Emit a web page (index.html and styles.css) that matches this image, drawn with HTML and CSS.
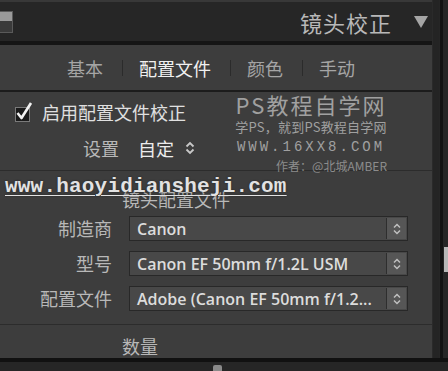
FILE: index.html
```html
<!DOCTYPE html>
<html lang="zh-CN">
<head>
  <meta charset="UTF-8">
  <title>镜头校正</title>
  <link rel="stylesheet" href="styles.css">
</head>
<body>
  <div class="frame">
    <div class="panel">
      <div class="header">
        <span class="switch"></span>
        <h1 class="title">镜头校正</h1>
        <span class="caret"></span>
      </div>

      <div class="tabs">
        <span class="tab">基本</span><span class="sep"></span>
        <span class="tab active">配置文件</span><span class="sep"></span>
        <span class="tab">颜色</span><span class="sep"></span>
        <span class="tab">手动</span>
      </div>

      <div class="profile">
        <label class="check-row">
          <svg class="check" width="20" height="22" viewBox="0 0 20 22">
            <rect x="1.5" y="6.5" width="14" height="14" fill="#1a1a1a" stroke="#7a7a7a" stroke-width="1"/>
            <path d="M3.5 12 L7.5 17 L17 2" fill="none" stroke="#f2f2f2" stroke-width="2.6" stroke-linejoin="round"/>
          </svg>
          <span>启用配置文件校正</span>
        </label>
        <div class="setting-row">
          <span class="setting-label">设置</span>
          <span class="setting-value">自定</span>
          <svg class="updown" width="10" height="14" viewBox="0 0 10 14">
            <path d="M1.5 5.5 L5 2 L8.5 5.5 M1.5 8.5 L5 12 L8.5 8.5" fill="none" stroke="#c8c8c8" stroke-width="1.8"/>
          </svg>
        </div>

        <div class="stamp">
          <div class="stamp-name">PS教程自学网</div>
          <div class="stamp-slogan">学PS，就到PS教程自学网</div>
          <div class="stamp-url">WWW.16XX8.COM</div>
          <div class="stamp-author">作者：@北城AMBER</div>
        </div>
      </div>

      <div class="lens">
        <h3 class="section-title">镜头配置文件</h3>
        <div class="fields">
          <span class="field-label">制造商</span>
          <div class="select"><span class="select-text">Canon</span><span class="spin"></span></div>
          <span class="field-label">型号</span>
          <div class="select"><span class="select-text">Canon EF 50mm f/1.2L USM</span><span class="spin"></span></div>
          <span class="field-label">配置文件</span>
          <div class="select"><span class="select-text">Adobe (Canon EF 50mm f/1.2...</span><span class="spin"></span></div>
        </div>
      </div>

      <div class="amount">
        <h3 class="section-title">数量</h3>
      </div>
    </div>

    <div class="gutter">
      <div class="thumb"></div>
    </div>
  </div>

  <div class="footer"><span class="handle"></span></div>

  <div class="site-mark">www.haoyidiansheji.com</div>
</body>
</html>
```

FILE: styles.css
```css
body { margin: 0; width: 448px; height: 371px; overflow: hidden; background: #202020; font-family: "Noto Sans CJK SC", sans-serif; position: relative; }
.frame { display: flex; height: 358px; }
.panel { width: 432px; border-right: 1px solid #2a2a2a; background: #3d3d3d; display: flex; flex-direction: column; }
.panel > div { flex-shrink: 0; }

.header { height: 39px; border-top: 2px solid #383838; border-bottom: 4px solid #151515; background: #262626; display: flex; align-items: center; }
.switch { width: 12px; height: 20px; margin-right: auto; border: 1px solid #5a5a5a; border-left: none; background: linear-gradient(#9a9a9a 0 45%, #3a3a3a 45% 100%); }
.title { margin: 0; font-size: 22px; font-weight: 400; letter-spacing: 1px; color: #b8b8b8; }
.caret { width: 0; height: 0; margin: 0 4px 0 22px; border-left: 7px solid transparent; border-right: 7px solid transparent; border-top: 12px solid #a5a5a5; }

.tabs { height: 45px; border-bottom: 2px solid #1c1c1c; display: flex; align-items: center; padding-left: 67px; font-size: 18px; color: #a5a5a5; }
.tab { line-height: 22px; }
.tab.active { color: #f0f0f0; }
.sep { width: 1px; height: 16px; background: #2b2b2b; margin: 0 16px 0 19px; }

.profile { position: relative; height: 70px; padding-top: 8px; border-bottom: 1px solid #2c2c2c; }
.check-row { display: flex; align-items: flex-end; padding-left: 14px; gap: 8px; font-size: 18px; color: #e0e0e0; height: 24px; line-height: 24px; }
.check { display: block; margin-bottom: 1px; }
.setting-row { display: flex; align-items: center; margin-top: 11px; padding-left: 83px; height: 26px; font-size: 18px; }
.setting-label { color: #b8b8b8; }
.setting-value { color: #ececec; margin-left: 19px; }
.updown { margin-left: 11px; }

.stamp { position: absolute; top: 0; left: 231px; width: 160px; text-align: center; color: #a0a0a0; white-space: nowrap; }
.stamp-name { font-size: 22px; line-height: 24px; letter-spacing: 2px; margin-bottom: 2px; }
.stamp-slogan { font-size: 13px; line-height: 18px; letter-spacing: 0.2px; margin-bottom: 2px; }
.stamp-url { font-family: "Liberation Mono", monospace; font-size: 14px; line-height: 18px; letter-spacing: 3px; margin-bottom: 2px; }
.stamp-author { font-size: 12px; line-height: 16px; text-align: right; padding-right: 4px; color: #8c8c8c; }

.lens { padding: 17px 0 13px; border-bottom: 1px solid #2c2c2c; }
.section-title { margin: 0 0 0 122px; font-size: 18px; font-weight: 400; line-height: 22px; color: #b8b8b8; }
.fields { display: grid; grid-template-columns: 112px 279px; column-gap: 17px; row-gap: 10px; margin-top: 6px; align-items: center; }
.field-label { text-align: right; font-size: 18px; color: #b8b8b8; line-height: 25px; }
.select { height: 23px; border: 1px solid #282828; background: #484848; display: flex; align-items: center; }
.select-text { flex: 1; padding-left: 7px; font-family: "Open Sans", sans-serif; font-weight: 600; font-size: 16px; color: #dcdcdc; white-space: nowrap; overflow: hidden; }
.spin { width: 19px; height: 21px; margin-right: 1px; border-left: 1px solid #2e2e2e; background: #565656 url("data:image/svg+xml,%3Csvg xmlns='http://www.w3.org/2000/svg' width='10' height='14'%3E%3Cpath d='M2 5.5 L5 2.5 L8 5.5 M2 8.5 L5 11.5 L8 8.5' fill='none' stroke='%23c0c0c0' stroke-width='1.5'/%3E%3C/svg%3E") center no-repeat; }

.amount { flex: 1; padding-top: 10px; }

.gutter { flex: 1; position: relative; background: #262626; border-left: 6px solid #242424; }
.gutter::before { content: ""; position: absolute; left: 1px; top: 0; bottom: 0; width: 3px; background: #131313; }
.thumb { position: absolute; left: 5px; top: 247px; width: 4px; height: 25px; background: #b8b8b8; }

.footer { height: 13px; border-top: 4px solid #111; box-sizing: border-box; background: #262626; position: relative; }
.handle { position: absolute; left: 213px; top: 3px; width: 9px; height: 6px; background: #8a8a8a; border-radius: 2px 2px 0 0; }

.site-mark { position: absolute; left: 5px; top: 175px; font-family: "Liberation Mono", monospace; font-weight: 700; font-size: 21px; letter-spacing: 0.2px; color: #e2e2e2; text-decoration: underline; text-underline-offset: 3px; text-decoration-thickness: 1px; line-height: 24px; text-shadow: 0 0 2px #222; }
```
